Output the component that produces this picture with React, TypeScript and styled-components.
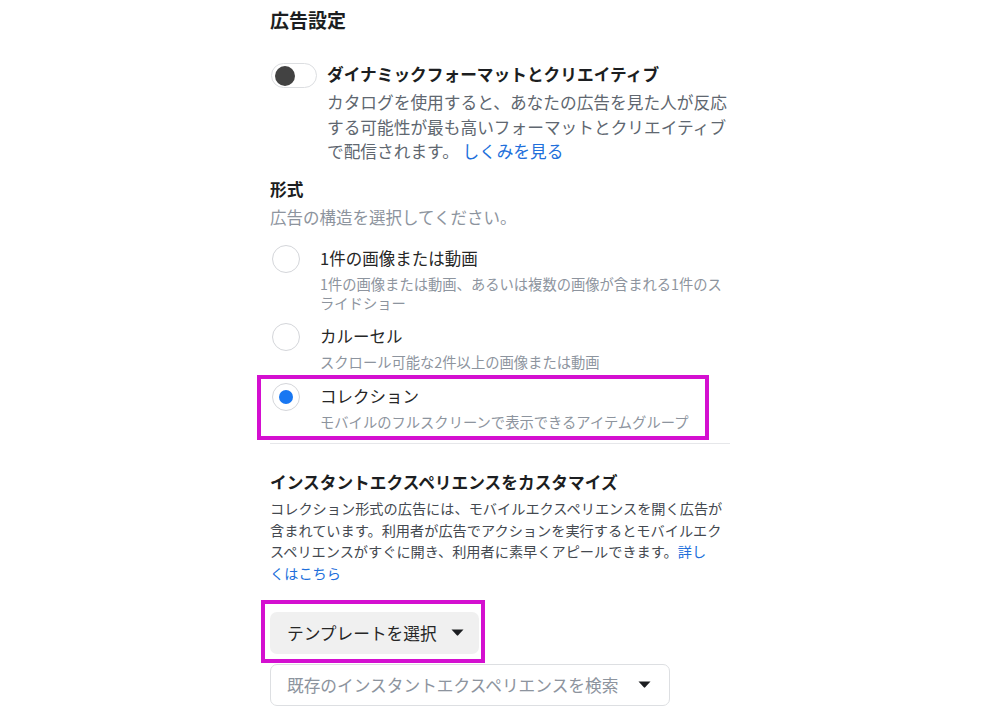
import React from "react";
import styled, { createGlobalStyle } from "styled-components";

const GlobalStyle = createGlobalStyle`
  html, body {
    margin: 0;
    background: #ffffff;
  }
  body {
    font-family: "Noto Sans CJK JP", "Noto Sans", sans-serif;
    color: #1c1e21;
  }
`;

type OptionData = {
  label: string;
  sub: string;
  selected?: boolean;
};

const formatOptions: OptionData[] = [
  {
    label: "1件の画像または動画",
    sub: "1件の画像または動画、あるいは複数の画像が含まれる1件のスライドショー",
  },
  { label: "カルーセル", sub: "スクロール可能な2件以上の画像または動画" },
  {
    label: "コレクション",
    sub: "モバイルのフルスクリーンで表示できるアイテムグループ",
    selected: true,
  },
];

function Caret() {
  return (
    <CaretIcon width="13" height="7" viewBox="0 0 13 7">
      <path d="M0.5 0.5 H12.5 L7.2 6.3 Q6.5 7 5.8 6.3 Z" fill="currentColor" />
    </CaretIcon>
  );
}

export default function App() {
  return (
    <>
      <GlobalStyle />
      <Page>
        <SectionHeading>広告設定</SectionHeading>

        <ToggleRow>
          <Switch>
            <Knob />
          </Switch>
          <ToggleText>
            <ToggleTitle>ダイナミックフォーマットとクリエイティブ</ToggleTitle>
            <ToggleDesc>
              カタログを使用すると、あなたの広告を見た人が反応する可能性が最も高いフォーマットとクリエイティブで配信されます。{" "}
              <Link>しくみを見る</Link>
            </ToggleDesc>
          </ToggleText>
        </ToggleRow>

        <FieldLabel>形式</FieldLabel>
        <FieldHint>広告の構造を選択してください。</FieldHint>

        <RadioList>
          {formatOptions.map((opt) => (
            <RadioOption key={opt.label} $marked={opt.selected}>
              <RadioCircle $checked={opt.selected}>
                {opt.selected && <RadioDot />}
              </RadioCircle>
              <OptionBody>
                <OptionLabel>{opt.label}</OptionLabel>
                <OptionSub>{opt.sub}</OptionSub>
              </OptionBody>
            </RadioOption>
          ))}
        </RadioList>

        <Divider />

        <SubHeading>インスタントエクスペリエンスをカスタマイズ</SubHeading>
        <Paragraph>
          コレクション形式の広告には、モバイルエクスペリエンスを開く広告が含まれています。利用者が広告でアクションを実行するとモバイルエクスペリエンスがすぐに開き、利用者に素早くアピールできます。
          <Link>
            詳し
            <br />
            くはこちら
          </Link>
        </Paragraph>

        <TemplateButton type="button">
          テンプレートを選択
          <Caret />
        </TemplateButton>

        <SearchSelect>
          <SelectPlaceholder>既存のインスタントエクスペリエンスを検索</SelectPlaceholder>
          <Caret />
        </SearchSelect>
      </Page>
    </>
  );
}

const Page = styled.main`
  width: 460px;
  margin: 0 auto;
  padding-top: 7px;
  display: flex;
  flex-direction: column;
`;

const SectionHeading = styled.h2`
  margin: 0;
  font-size: 19px;
  line-height: 26px;
  font-weight: 700;
  color: #1c1e21;
`;

const ToggleRow = styled.div`
  display: flex;
  align-items: flex-start;
  gap: 10px;
  margin-top: 29px;
`;

const Switch = styled.div`
  box-sizing: border-box;
  flex: none;
  width: 46px;
  height: 25px;
  margin: 1px 0 0 1px;
  padding-left: 3px;
  display: flex;
  align-items: center;
  border: 1px solid #dcdee1;
  border-radius: 13px;
  background: #ffffff;
`;

const Knob = styled.span`
  width: 20px;
  height: 20px;
  border-radius: 50%;
  background: #424242;
`;

const ToggleText = styled.div`
  flex: 1;
  display: flex;
  flex-direction: column;
`;

const ToggleTitle = styled.div`
  font-size: 16.7px;
  line-height: 24px;
  font-weight: 700;
  color: #1c1e21;
`;

const ToggleDesc = styled.p`
  margin: 4px 0 0;
  font-size: 16.7px;
  line-height: 24.5px;
  color: #606770;
`;

const Link = styled.a`
  color: #216fdb;
  text-decoration: none;
  cursor: pointer;
`;

const FieldLabel = styled.div`
  margin-top: 14px;
  font-size: 16.7px;
  line-height: 22px;
  font-weight: 700;
  color: #1c1e21;
`;

const FieldHint = styled.div`
  margin-top: 6px;
  font-size: 16.5px;
  line-height: 22px;
  color: #8d949e;
`;

const RadioList = styled.div`
  margin-top: 17px;
  display: flex;
  flex-direction: column;
  gap: 11.5px;
`;

const RadioOption = styled.label<{ $marked?: boolean }>`
  position: relative;
  display: flex;
  align-items: flex-start;
  gap: 20px;
  padding-left: 2px;
  cursor: pointer;

  ${(p) =>
    p.$marked &&
    `
    &::after {
      content: "";
      position: absolute;
      top: -8px;
      bottom: -9px;
      left: -13px;
      right: 21px;
      border: 4px solid #d40fd0;
      pointer-events: none;
    }
  `}
`;

const RadioCircle = styled.span<{ $checked?: boolean }>`
  box-sizing: border-box;
  flex: none;
  width: 28px;
  height: 28px;
  border-radius: 50%;
  border: 1px solid #d4d6da;
  background: #ffffff;
  display: flex;
  align-items: center;
  justify-content: center;
`;

const RadioDot = styled.span`
  width: 14px;
  height: 14px;
  border-radius: 50%;
  background: #1877f2;
`;

const OptionBody = styled.div`
  flex: 1;
  display: flex;
  flex-direction: column;
  padding-top: 1px;
`;

const OptionLabel = styled.div`
  font-size: 16.5px;
  line-height: 25px;
  color: #262626;
`;

const OptionSub = styled.div`
  margin-top: 3px;
  font-size: 14.3px;
  line-height: 19px;
  color: #8d949e;
`;

const Divider = styled.hr`
  margin: 12.5px 0 0;
  border: none;
  height: 1px;
  background: #e6e7ea;
`;

const SubHeading = styled.h3`
  margin: 26px 0 0;
  font-size: 16.7px;
  line-height: 24px;
  font-weight: 700;
  color: #1c1e21;
`;

const Paragraph = styled.p`
  margin: 4px 0 0;
  font-size: 14.2px;
  line-height: 21.7px;
  color: #444950;
`;

const CaretIcon = styled.svg`
  flex: none;
  display: block;
  color: #1c1e21;
`;

const TemplateButton = styled.button`
  position: relative;
  align-self: flex-start;
  margin-top: 27px;
  height: 42px;
  padding: 0 15px 0 17px;
  display: flex;
  align-items: center;
  gap: 14px;
  border: none;
  border-radius: 7px;
  background: #f0f0f0;
  font-family: inherit;
  font-size: 16.7px;
  color: #262626;
  cursor: pointer;

  &::after {
    content: "";
    position: absolute;
    top: -12px;
    bottom: -9px;
    left: -9px;
    right: -6px;
    border: 4px solid #d40fd0;
    pointer-events: none;
  }
`;

const SearchSelect = styled.div`
  box-sizing: border-box;
  margin-top: 10px;
  width: 400px;
  height: 42px;
  padding: 0 18px 0 16px;
  display: flex;
  align-items: center;
  justify-content: space-between;
  border: 1px solid #dddfe2;
  border-radius: 7px;
  background: #ffffff;
`;

const SelectPlaceholder = styled.span`
  font-size: 16.7px;
  color: #8d949e;
`;
